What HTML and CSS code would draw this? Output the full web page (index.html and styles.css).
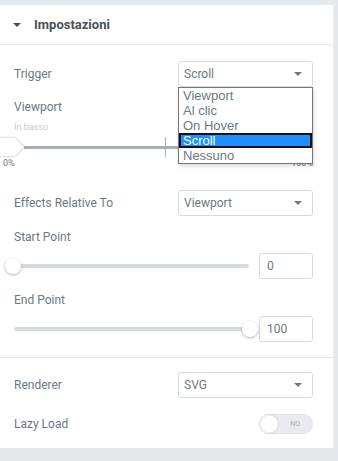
FILE: index.html
```html
<!DOCTYPE html>
<html lang="it">
<head>
  <meta charset="UTF-8">
  <meta name="viewport" content="width=device-width, initial-scale=1.0">
  <title>Impostazioni</title>
  <link rel="stylesheet" href="styles.css">
</head>
<body>
  <div class="panel">
    <div class="section-head">
      <span class="caret"></span>
      <span class="section-title">Impostazioni</span>
    </div>

    <div class="section-body">
      <div class="row">
        <span class="label">Trigger</span>
        <div class="select-wrap">
          <div class="select">Scroll<span class="arrow"></span></div>
          <ul class="dropdown">
            <li>Viewport</li>
            <li>Al clic</li>
            <li>On Hover</li>
            <li class="selected">Scroll</li>
            <li>Nessuno</li>
          </ul>
        </div>
      </div>

      <div class="block viewport">
        <span class="label">Viewport</span>
        <span class="hint">In basso</span>
        <div class="range-dark">
          <span class="flag"><span class="flag-shape"></span></span>
          <span class="dark-track first"></span>
          <span class="tick"></span>
          <span class="dark-track"></span>
        </div>
        <div class="range-ends">
          <span>0%</span>
          <span>100%</span>
        </div>
      </div>

      <div class="row relative-to">
        <span class="label">Effects Relative To</span>
        <div class="select">Viewport<span class="arrow"></span></div>
      </div>

      <div class="block">
        <span class="label">Start Point</span>
        <div class="slider-row">
          <div class="slider">
            <span class="track"></span>
            <span class="thumb start"></span>
          </div>
          <div class="num">0</div>
        </div>
      </div>

      <div class="block">
        <span class="label">End Point</span>
        <div class="slider-row">
          <div class="slider">
            <span class="track"></span>
            <span class="thumb end"></span>
          </div>
          <div class="num">100</div>
        </div>
      </div>
    </div>

    <div class="section-body lower">
      <div class="row">
        <span class="label">Renderer</span>
        <div class="select">SVG<span class="arrow"></span></div>
      </div>
      <div class="row lazy">
        <span class="label">Lazy Load</span>
        <div class="switch"><span class="knob"></span><span class="switch-text">NO</span></div>
      </div>
    </div>
  </div>
</body>
</html>
```

FILE: styles.css
```css
body {
  margin: 0;
  background-color: #e6e9ec;
  font-family: Roboto, Arial, sans-serif;
  color: #6d7882;
  width: 338px;
  height: 461px;
  overflow: hidden;
}
.panel {
  margin-top: 5px;
  width: 333px;
  background-color: white;
  border-right: 1px solid #eceef0;
}
.section-head {
  display: flex;
  align-items: center;
  height: 39px;
  padding-left: 13px;
  border-bottom: 1px solid #e6e9ec;
}
.caret {
  width: 0;
  height: 0;
  border-left: 4px solid transparent;
  border-right: 4px solid transparent;
  border-top: 4px solid #495157;
  margin-right: 13px;
}
.section-title {
  font-size: 13px;
  font-weight: bold;
  color: #495157;
}
.section-body {
  padding: 16px 20px 15px 14px;
  display: flex;
  flex-direction: column;
}
.section-body.lower {
  border-top: 1px solid #e6e9ec;
  padding-top: 14px;
  padding-bottom: 14px;
}
.row {
  display: flex;
  align-items: center;
  justify-content: space-between;
}
.label {
  font-size: 12px;
  line-height: 14px;
  color: #6d7882;
}
.select-wrap {
  position: relative;
}
.select {
  box-sizing: border-box;
  width: 135px;
  height: 26px;
  border: 1px solid #d5dadf;
  border-radius: 3px;
  font-size: 12px;
  color: #6d7882;
  padding-left: 5px;
  display: flex;
  align-items: center;
  justify-content: space-between;
  padding-right: 10px;
}
.arrow {
  width: 0;
  height: 0;
  border-left: 4px solid transparent;
  border-right: 4px solid transparent;
  border-top: 4px solid #6d7882;
}
.dropdown {
  position: absolute;
  top: 26px;
  left: 0;
  width: 135px;
  box-sizing: border-box;
  margin: 0;
  padding: 0;
  list-style: none;
  background-color: white;
  border: 1px solid #767676;
  font-family: "Liberation Sans", Arial, sans-serif;
  font-size: 13px;
  color: #6d7882;
  z-index: 2;
  box-shadow: 1px 2px 4px rgba(0, 0, 0, 0.15);
}
.dropdown li {
  height: 15px;
  line-height: 15px;
  padding-left: 4px;
}
.dropdown li.selected {
  background-color: #1e90ff;
  color: white;
  outline: 2px solid #111;
  outline-offset: -2px;
}
.block {
  display: flex;
  flex-direction: column;
  margin-top: 14px;
}
.viewport {
  margin-top: 13px;
}
.hint {
  font-size: 9px;
  line-height: 11px;
  color: #c2cbd2;
  margin-top: 8px;
}
.range-dark {
  display: flex;
  align-items: center;
  margin-left: -14px;
  margin-top: 4px;
  height: 20px;
}
.flag {
  display: block;
  position: relative;
  z-index: 1;
  filter: drop-shadow(0 0 1px rgba(0, 0, 0, 0.35));
}
.flag-shape {
  display: block;
  width: 24px;
  height: 18px;
  background-color: white;
  clip-path: polygon(0 0, 62% 0, 100% 50%, 62% 100%, 0 100%);
}
.dark-track {
  flex: 1;
  height: 3px;
  background-color: #a4afb7;
}
.dark-track.first {
  flex: none;
  width: 141px;
}
.tick {
  width: 1px;
  height: 20px;
  background-color: #a4afb7;
}
.range-ends {
  display: flex;
  justify-content: space-between;
  margin-left: -11px;
  font-size: 9px;
  line-height: 11px;
  color: #6d7882;
  margin-top: 1px;
}
.relative-to {
  margin-top: 21px;
}
.slider-row {
  display: flex;
  align-items: center;
  justify-content: space-between;
  margin-top: 9px;
}
.slider {
  position: relative;
  width: 235px;
  height: 18px;
  display: flex;
  align-items: center;
}
.track {
  width: 100%;
  height: 4px;
  border-radius: 2px;
  background-color: #d5dadf;
}
.thumb {
  position: absolute;
  top: 1px;
  width: 16px;
  height: 16px;
  border-radius: 50%;
  background-color: white;
  box-shadow: 0 1px 3px rgba(0, 0, 0, 0.3);
}
.thumb.start {
  left: -9px;
}
.thumb.end {
  right: -9px;
}
.num {
  box-sizing: border-box;
  width: 54px;
  height: 26px;
  border: 1px solid #d5dadf;
  border-radius: 3px;
  font-size: 12px;
  color: #6d7882;
  padding-left: 7px;
  display: flex;
  align-items: center;
}
.lazy {
  margin-top: 16px;
}
.switch {
  box-sizing: border-box;
  width: 54px;
  height: 20px;
  border-radius: 10px;
  background-color: #e8eaed;
  border: 1px solid #dfe2e5;
  display: flex;
  align-items: center;
  justify-content: space-between;
  padding-right: 12px;
}
.knob {
  width: 18px;
  height: 18px;
  border-radius: 50%;
  background-color: white;
  box-shadow: 0 0 2px rgba(0, 0, 0, 0.2);
}
.switch-text {
  font-size: 7px;
  color: #a4afb7;
}
```
